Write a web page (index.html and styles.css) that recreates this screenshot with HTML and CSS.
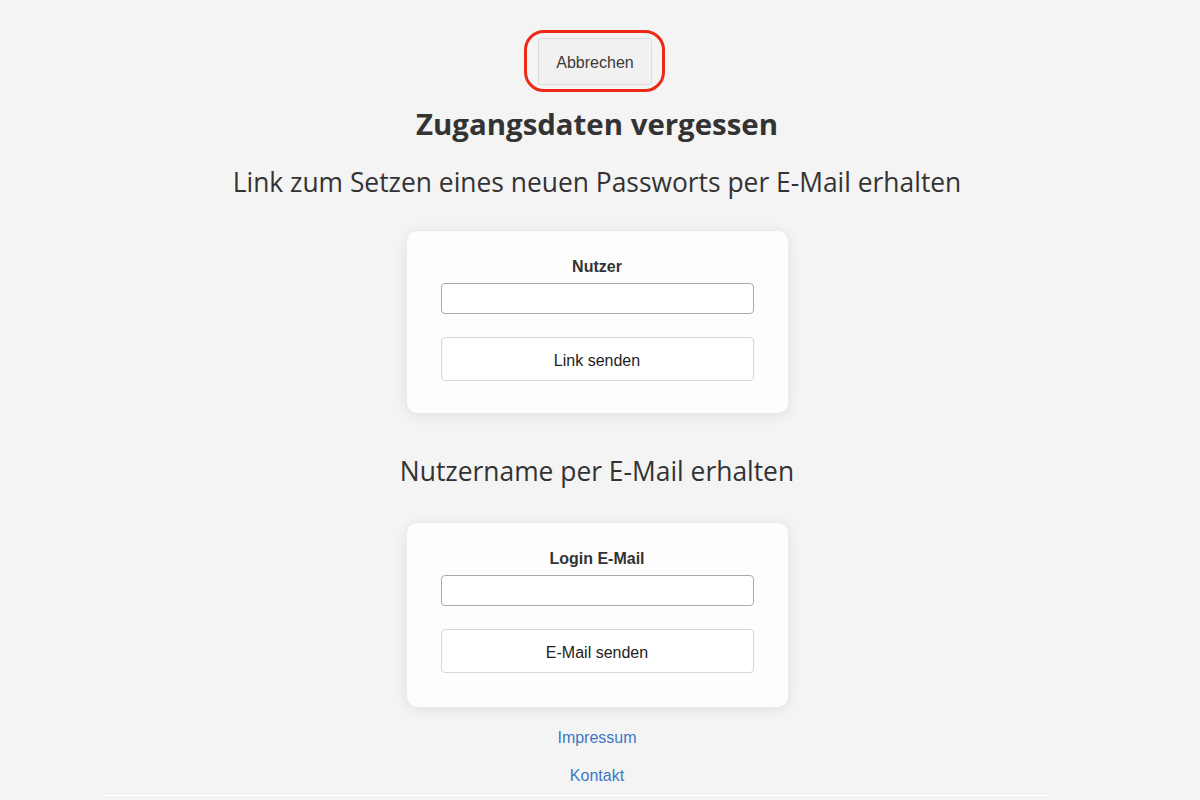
FILE: index.html
```html
<!DOCTYPE html>
<html lang="de">
<head>
    <meta charset="UTF-8">
    <meta name="viewport" content="width=device-width, initial-scale=1.0">
    <title>Zugangsdaten vergessen</title>
    <link rel="stylesheet" href="styles.css">
</head>
<body>
    <div class="page">
        <!-- Abbrechen, markiert -->
        <div class="highlight">
            <button class="cancel-btn" type="button">Abbrechen</button>
        </div>

        <h1>Zugangsdaten vergessen</h1>

        <h2>Link zum Setzen eines neuen Passworts per E-Mail erhalten</h2>
        <form class="card">
            <label for="user">Nutzer</label>
            <input id="user" type="text">
            <button class="send-btn" type="button">Link senden</button>
        </form>

        <h2 class="second">Nutzername per E-Mail erhalten</h2>
        <form class="card card-mail">
            <label for="mail">Login E-Mail</label>
            <input id="mail" type="text">
            <button class="send-btn" type="button">E-Mail senden</button>
        </form>

        <!-- Footer -->
        <div class="footer">
            <a href="#">Impressum</a>
            <a href="#">Kontakt</a>
        </div>
        <div class="rule"></div>
    </div>
</body>
</html>
```

FILE: styles.css
```css
body {
    margin: 0;
    background-color: #f4f4f4;
    color: #333;
    font-family: "Open Sans", Arial, sans-serif;
}
.page {
    display: flex;
    flex-direction: column;
    align-items: center;
    box-sizing: border-box;
    padding: 30px 6px 0 0;
    height: 800px;
    overflow: hidden;
}
.highlight {
    margin-right: 5px;
    border: 3px solid #ee2a16;
    border-radius: 20px;
    padding: 5px 10px 4px 11px;
}
.cancel-btn {
    display: block;
    width: 114px;
    height: 47px;
    padding-top: 3px;
    background-color: #f1f1f1;
    border: 1px solid #dcdcdc;
    border-radius: 3px;
    color: #3a3a3a;
    font-family: "Liberation Sans", Arial, sans-serif;
    font-size: 16px;
}
h1 {
    margin: 13px 0 0;
    font-size: 29.4px;
    line-height: 38px;
    font-weight: 700;
    color: #333;
}
h2 {
    margin: 21px 0 0;
    font-size: 26.4px;
    line-height: 36px;
    font-weight: 400;
    color: #333;
}
h2.second {
    margin-top: 40px;
}
.card {
    display: flex;
    flex-direction: column;
    align-items: center;
    box-sizing: border-box;
    width: 381px;
    margin-top: 31px;
    padding: 27px 34px 32px;
    background-color: #fdfdfd;
    border-radius: 10px;
    box-shadow: 0 2px 14px rgba(0, 0, 0, 0.09);
}
.card-mail {
    margin-top: 34px;
    padding-bottom: 34px;
}
.card label {
    font-family: "Liberation Sans", Arial, sans-serif;
    font-size: 16px;
    font-weight: 700;
    line-height: 18px;
    color: #333;
}
.card input {
    box-sizing: border-box;
    width: 313px;
    height: 31px;
    margin-top: 7px;
    border: 1px solid #aaa;
    border-radius: 4px;
    background: #fff;
}
.send-btn {
    width: 313px;
    height: 44px;
    margin-top: 23px;
    padding-top: 5px;
    background-color: #fff;
    border: 1px solid #d6d6d6;
    border-radius: 4px;
    color: #222;
    font-family: "Liberation Sans", Arial, sans-serif;
    font-size: 16px;
}
.footer {
    display: flex;
    flex-direction: column;
    align-items: center;
    gap: 19px;
    margin-top: 21px;
}
.footer a {
    font-family: "Liberation Sans", Arial, sans-serif;
    font-size: 16px;
    line-height: 19px;
    color: #3d78c2;
    text-decoration: none;
}
.rule {
    align-self: flex-start;
    width: 946px;
    height: 1px;
    margin: 10px 0 0 103px;
    background-color: #fff;
}
```
